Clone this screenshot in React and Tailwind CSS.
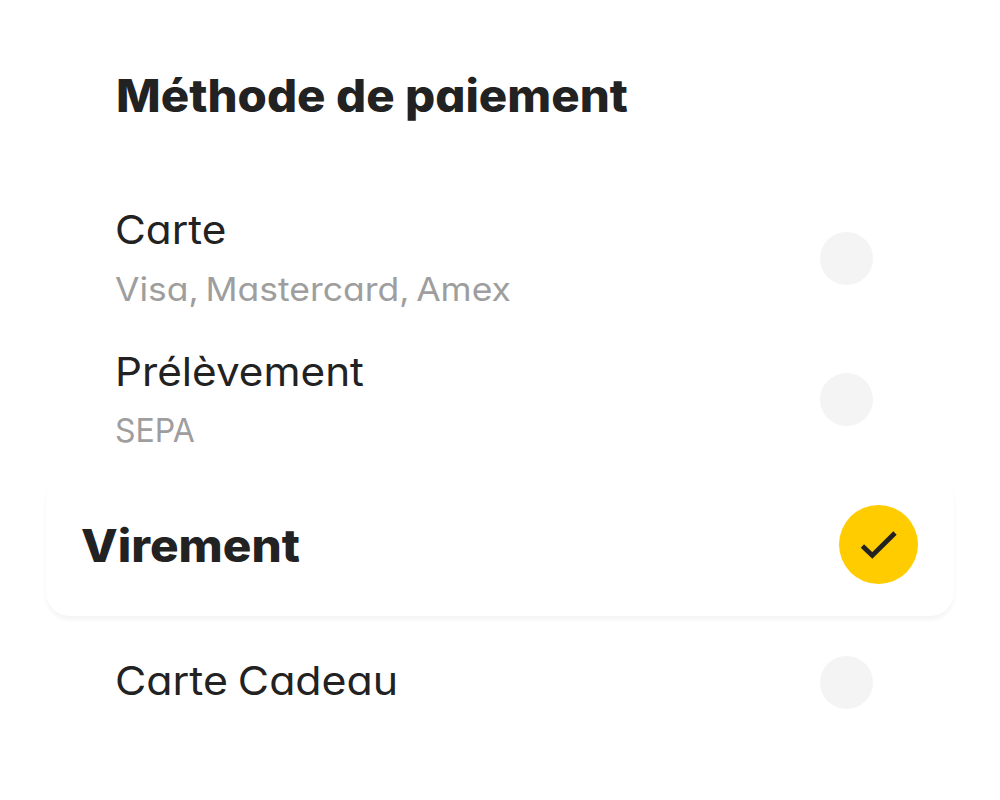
import React from "react";

function Option({ className, title, titleClass, detail, detailClass }) {
  return (
    <div className={`flex justify-between pl-[115px] pr-[127px] ${className}`}>
      <div className="flex flex-col items-start">
        <div className={`h-[59px] origin-left whitespace-nowrap text-[39.5px] leading-[50px] text-[#222222] ${titleClass}`}>{title}</div>
        {detail && (
          <div className={`origin-left whitespace-nowrap text-[33px] leading-[50px] text-[#9e9e9e] ${detailClass}`}>{detail}</div>
        )}
      </div>
      <div className="mt-[27px] size-[53px] shrink-0 rounded-full bg-[#f4f4f4]" />
    </div>
  );
}

export default function App() {
  return (
    <main className="flex h-[800px] w-[1000px] flex-col overflow-hidden bg-white font-['Inter',sans-serif] [font-feature-settings:'cv11']">
      <h1 className="ml-[115.5px] mt-[65px] h-[60px] origin-left scale-x-[1.053] whitespace-nowrap text-[45px] font-extrabold leading-[61px] text-[#222222]">
        Méthode de paiement
      </h1>
      <Option className="mt-[80px] h-[141px]" title="Carte" titleClass="scale-x-[1.07]" detail="Visa, Mastercard, Amex" detailClass="scale-x-[1.075] [word-spacing:-3px]" />
      <Option className="h-[127px]" title="Prélèvement" titleClass="pt-px scale-x-[1.07]" detail="SEPA" detailClass="scale-x-[0.97]" />
      <section className="mx-[46px] flex h-[143px] shrink-0 items-center justify-between rounded-[24px] bg-white pl-[35px] pr-[36px] shadow-[0_4px_4px_rgba(0,0,0,0.045)]">
        <div className="origin-left scale-x-[1.06] whitespace-nowrap pt-[2px] text-[45px] font-extrabold leading-[60px] text-[#222222]">Virement</div>
        <div className="flex size-[79px] items-center justify-center rounded-full bg-[#ffcc00]">
          <svg width="79" height="79" viewBox="0 0 79 79" fill="none" stroke="#222222" strokeWidth="4.8">
            <path d="M23.4 41 L33.3 50.4 L56 28" />
          </svg>
        </div>
      </section>
      <Option className="mt-[13px]" title="Carte Cadeau" titleClass="pt-[27px] scale-x-[1.085] [word-spacing:-2px]" />
    </main>
  );
}
